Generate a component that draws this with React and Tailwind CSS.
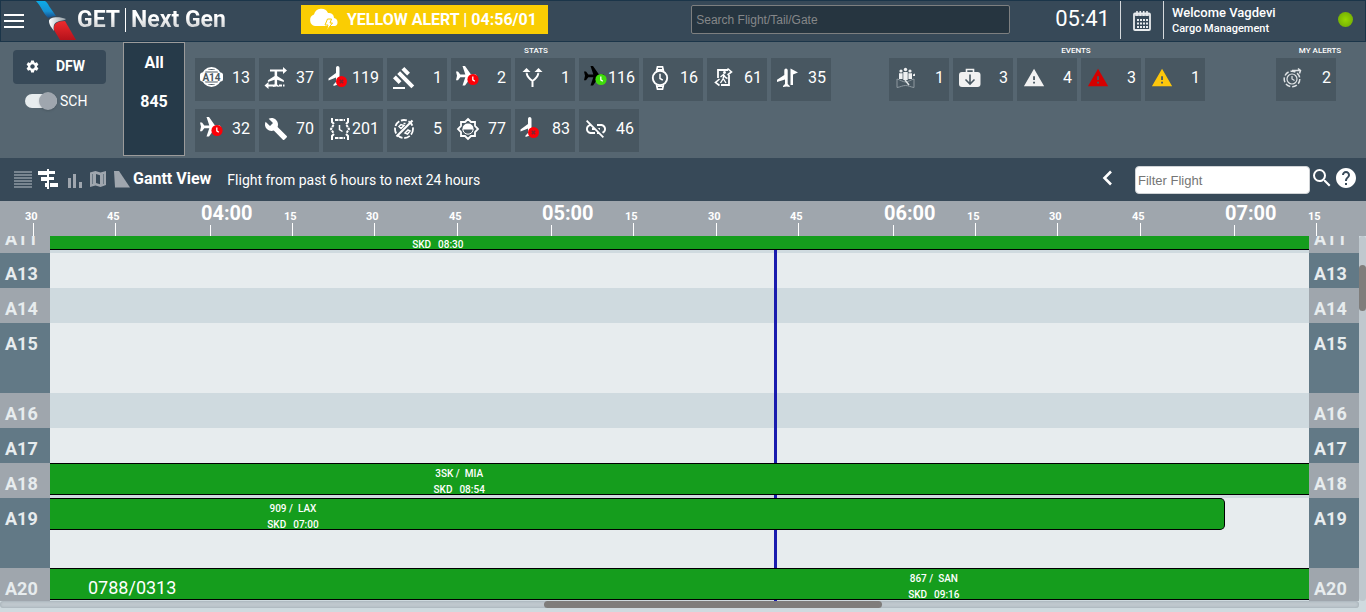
import React from "react";
import {
  MdBuild,
  MdGavel,
  MdHelp,
  MdLinkOff,
  MdSearch,
  MdSettings,
  MdWarning,
} from "react-icons/md";

const PLANE =
  "M21 16v-2l-8-5V3.500c0-.83-.67-1.500-1.500-1.500S10 2.670 10 3.500V9l-8 5v2l8-2.500V19l-2 1.500V22l3.500-1 3.500 1v-1.500L13 19v-5.500l8 2.500z";

function Svg({ children, className = "h-6 w-6" }) {
  return (
    <svg viewBox="0 0 24 24" className={className} fill="none" stroke="none" aria-hidden="true">
      {children}
    </svg>
  );
}

function GateIcon() {
  return (
    <Svg>
      <circle cx="11.500" cy="11" r="9" stroke="#fff" strokeWidth="2" />
      <path d="M6 4.800h11M6 17.200h11" stroke="#fff" strokeWidth="1.400" />
      <rect x="0" y="6.500" width="23" height="9" rx="2.500" fill="#fff" />
      <text x="11.500" y="14.500" textAnchor="middle" className="fill-[#485761] font-[Roboto] text-[10px] font-bold">
        A14
      </text>
    </Svg>
  );
}

function SwapPlaneIcon() {
  return (
    <Svg>
      <g transform="translate(2.200 2.500) scale(.84)">
        <path d={PLANE} fill="#fff" />
      </g>
      <path d="M6 3.500h13V1l4 3.500-4 3.500V5.500H6zM12 20.500H4.500v2.500L.5 19.500l4-3.500v2.500H12zM15 18.500h3v2h-3zM19 18.500h1.500v2H19z" fill="#fff" />
    </Svg>
  );
}

function CancelPlaneIcon() {
  return (
    <Svg>
      <path d="M8 2c0-1.300.8-2 1.700-2s1.800.7 1.800 2v16l-3 1-3 1v-1.500L8 16v-4.500L.5 14.500v-2L8 7z" fill="#fff" />
      <circle cx="13.500" cy="15.500" r="5.500" fill="#fb0007" />
      <path d="M11.800 13.800l3.400 3.400m0-3.400l-3.400 3.400" stroke="#7b2630" strokeWidth="1.500" />
    </Svg>
  );
}

function DelayPlaneIcon({ plane = "#fff", badge = "#fb0007" }) {
  return (
    <Svg>
      <path
        d="M0 5.500h2l2.300 3h5L6.500 0H9l6 8.500h4c1 0 1.800.6 1.800 1.300S20 11.200 19 11.200h-4l-6 8.300H6.500l2.800-8.300h-5l-2.300 3H0l1-4.400z"
        fill={plane}
      />
      <circle cx="17" cy="13.500" r="5.600" fill={badge} />
      <path d="M16.800 10.500v3.300l2 1.500" stroke="#fff" strokeWidth="1.300" />
    </Svg>
  );
}

function ForkIcon() {
  return (
    <Svg>
      <path d="M12.500 21v-6.500M12.500 15C8 12 6.500 9 6.500 5.500M12.500 15c4.500-3 6-6 6-9.500" stroke="#fff" strokeWidth="2" strokeDasharray="10 1" />
      <path d="M6.500 2l4 4h-8zM18.500 2l4 4h-8z" fill="#fff" />
    </Svg>
  );
}

function WatchIcon() {
  return (
    <Svg>
      <path d="M8.500 5l1-4.200h5l1 4.200M8.500 19l1 4.200h5l1-4.200" stroke="#fff" strokeWidth="1.700" />
      <path d="M8 3.500h8M8 20.500h8" stroke="#fff" strokeWidth="1.200" />
      <circle cx="12" cy="12" r="7.200" stroke="#fff" strokeWidth="1.900" />
      <path d="M12 7.800v4.700l2.800 1.700" stroke="#fff" strokeWidth="1.500" />
    </Svg>
  );
}

function ExitIcon() {
  return (
    <Svg>
      <path d="M6 12V4h10M17 9v10H9" stroke="#fff" strokeWidth="1.800" />
      <path d="M15.500 2.500l4 3.500-4 3M7.500 13l-4 3.500 4 3" stroke="#fff" strokeWidth="1.600" />
      <circle cx="12.500" cy="6.500" r="1.400" fill="#fff" />
      <path d="M8.500 11l3-2.500 2 3 2 1M12 9l-1 4-2.500 4M11.500 13l2.500 4" stroke="#fff" strokeWidth="1.400" />
    </Svg>
  );
}

function PlaneFlagIcon() {
  return (
    <Svg>
      <path d="M10 2.500c.9 0 1.700.7 1.700 2V18l2 2v1l-3-.5L7 21v-1l2-2v-4.500L1 16v-2.200l7.300-4.800V4.500c0-1.300.8-2 1.700-2z" fill="#fff" />
      <path d="M14.500 19V2.500l7.500 4-5 2V19z" fill="#fff" />
    </Svg>
  );
}

function CrewIcon() {
  return (
    <Svg>
      <g fill="#eef0f1">
        <circle cx="11.500" cy="3.500" r="1.700" />
        <circle cx="7" cy="5" r="1.600" />
        <circle cx="16" cy="5" r="1.600" />
        <path d="M5 7.300h3.600V13H5zM9.300 6h4.400v8H9.300zM14.400 7.300H18V13h-3.600zM19 8.500l2-1V10h-2z" />
      </g>
      <path d="M3 13c3.500 1 6 3 8.500 3s5-2 8.500-3v8.500c-3.500-.5-5.500-2-8.500-2s-5 1.500-8.500 2z" stroke="#8d989f" strokeWidth="1" />
      <path d="M11 14l4 5" stroke="#dfe3e5" strokeWidth="1.500" />
    </Svg>
  );
}

function BaggageIcon() {
  return (
    <Svg>
      <path d="M8.500 6V3.500h7V6" stroke="#f1f1f1" strokeWidth="1.600" />
      <rect x="1" y="6" width="21.500" height="15" rx="3" fill="#f1f1f1" />
      <path d="M12 8.500v9M7.500 13.500L12 18l4.500-4.500" stroke="#485761" strokeWidth="1.600" />
    </Svg>
  );
}

function AlertIcon({ color }) {
  return (
    <Svg>
      <g transform="translate(1 1) scale(.92)">
        <MdWarning color={color} size={24} />
      </g>
    </Svg>
  );
}

function AlarmIcon() {
  return (
    <Svg>
      <g stroke="#dfe3e5">
        <circle cx="11" cy="13" r="7.800" strokeWidth="1.500" strokeDasharray="5 2" />
        <circle cx="11" cy="13" r="5" strokeWidth="1.200" />
        <path d="M11 10v3l2.500 1.500" strokeWidth="1.200" />
        <path d="M11 4.500h8M17 2.500l2.500 2-1 3" strokeWidth="1.500" />
      </g>
    </Svg>
  );
}

function TimeWindowIcon() {
  return (
    <Svg>
      <path d="M4 1v4l2 2M20 1v4l-2 2M4 23v-4l2-2M20 23v-4l-2-2" stroke="#fff" strokeWidth="2" />
      <path d="M7 3h10M7 21h10" stroke="#fff" strokeWidth="2" strokeDasharray="3.500 .8" />
      <path d="M5.500 8L3 12l2.500 4M18.500 8l2.500 4-2.500 4" stroke="#fff" strokeWidth="2" strokeDasharray="2.500 .8" />
      <path d="M11.500 8v4.500l3 2" stroke="#fff" strokeWidth="1.500" />
    </Svg>
  );
}

function NoServiceIcon() {
  return (
    <Svg>
      <circle cx="12" cy="12" r="9" stroke="#fff" strokeWidth="1.800" strokeDasharray="6 1.800" />
      <path d="M4.500 19.500l16-16" stroke="#fff" strokeWidth="2.200" />
      <path d="M7 9.500l2-2 3 1-3 3zM13 16l3-3 2 1-2.500 3zM11.500 6.500h2" stroke="#fff" strokeWidth="1.500" />
    </Svg>
  );
}

function DaylightIcon() {
  return (
    <Svg>
      <path d="M12 2l3 3h4v4l3 3-3 3v4h-4l-3 3-3-3H5v-4l-3-3 3-3V5h4z" stroke="#fff" strokeWidth="1.800" />
      <path d="M6.500 12.500v-1a5.500 5 0 0111 0v1z" fill="#fff" />
      <path d="M6.800 12a5.200 5.200 0 0010.400 0" stroke="#fff" strokeWidth="1" />
    </Svg>
  );
}

const stats = [
  ["Gate change", "13", <GateIcon />],
  ["Tail swap", "37", <SwapPlaneIcon />],
  ["Cancelled arrival", "119", <CancelPlaneIcon />],
  ["Legality", "1", <MdGavel size={24} />],
  ["Delayed departure", "2", <DelayPlaneIcon />],
  ["Diversion", "1", <ForkIcon />],
  ["Early", "116", <DelayPlaneIcon plane="#000" badge="#3fdc0b" />],
  ["Time watch", "16", <WatchIcon />],
  ["Gate return", "61", <ExitIcon />],
  ["Flagged", "35", <PlaneFlagIcon />],
  ["Delayed arrival", "32", <DelayPlaneIcon />],
  ["Maintenance", "70", <MdBuild size={24} />],
  ["Time window", "201", <TimeWindowIcon />],
  ["Out of service", "5", <NoServiceIcon />],
  ["Daylight", "77", <DaylightIcon />],
  ["Cancelled departure", "83", <CancelPlaneIcon />],
  ["Unlinked", "46", <MdLinkOff size={24} />],
];

const events = [
  ["Crew", "1", <CrewIcon />],
  ["Baggage", "3", <BaggageIcon />],
  ["Notices", "4", <AlertIcon color="#f1f1f1" />],
  ["Critical", "3", <AlertIcon color="#d50000" />],
  ["Warnings", "1", <AlertIcon color="#fdc70c" />],
];

const myAlerts = [["Alarms", "2", <AlarmIcon />]];

function TileGroup({ title, tiles, className }) {
  return (
    <section className={className}>
      <h2 className="pt-[3px] pb-px text-center text-[8px] leading-3 font-medium whitespace-nowrap">{title}</h2>
      <div className="flex flex-wrap gap-x-1 gap-y-2">
        {tiles.map(([name, count, icon]) => (
          <button
            key={name}
            aria-label={name + " " + count}
            className="flex h-[43px] w-[60px] items-center justify-between bg-[#485761] px-[5px] pb-[3px] text-base"
          >
            <span className="shrink-0">{icon}</span>
            <span>{count}</span>
          </button>
        ))}
      </div>
    </section>
  );
}

function Header() {
  return (
    <header className="flex h-[42px] shrink-0 items-center border border-[#1b3549] bg-[#374958]">
      <button aria-label="Menu" className="ml-[3px] flex w-5 flex-col gap-1">
        <span className="h-[2px] bg-white" />
        <span className="h-[2px] bg-white" />
        <span className="h-[2px] bg-white" />
      </button>
      <svg viewBox="0 0 40 40" className="ml-3 h-10 w-10" aria-hidden="true">
        <defs>
          <linearGradient id="blue" x1="0" y1="0" x2="0" y2="1">
            <stop offset="0" stopColor="#0cabe8" />
            <stop offset=".6" stopColor="#1791d2" />
            <stop offset="1" stopColor="#174a86" />
          </linearGradient>
          <linearGradient id="red" x1="0" y1="0" x2="0" y2="1">
            <stop offset="0" stopColor="#ef2b2d" />
            <stop offset="1" stopColor="#b5121b" />
          </linearGradient>
          <linearGradient id="silver" x1="0" y1="0" x2="1" y2="0">
            <stop offset="0" stopColor="#ffffff" />
            <stop offset="1" stopColor="#8f9aa2" />
          </linearGradient>
        </defs>
        <path d="M0 0h9c2 1 3 3 4 5l7 10c-3 0-6 1-8 2C7 12 5 5 0 0z" fill="url(#blue)" />
        <path d="M13 20c0-4 10-5 17-2-1 2-6 1-9 3-3 1-4 4-3 9-2-3-5-6-5-10z" fill="url(#silver)" />
        <path d="M18 29c-1-6 3-9 11-9l11 19H24z" fill="url(#red)" />
      </svg>
      <h1 className="ml-px flex items-center pb-[2px] text-[23px] font-bold">
        <span className="bg-gradient-to-b from-white from-40% to-[#a9adb1] bg-clip-text text-transparent">GET</span>
        <span className="mx-[5px] h-6 w-px bg-white" />
        <span className="bg-gradient-to-b from-white from-40% to-[#a9adb1] bg-clip-text text-transparent">Next Gen</span>
      </h1>
      <div className="ml-[75px] flex h-[29px] w-[247px] items-center self-start bg-[#facd03] pl-2 text-base font-bold mt-1">
        <svg viewBox="0 0 30 24" className="mr-2 h-6 w-[30px]" aria-hidden="true">
          <path d="M6 18a6 6 0 01-1-11.500A7.500 7.500 0 0119 5a5 5 0 016 5 4.200 4.200 0 011 8z" fill="#fff" />
          <path d="M18.500 11h4l-1.500 4h2.500l-6 7.500 1.500-5.500h-3z" fill="#fff" stroke="#facd03" strokeWidth="1" />
        </svg>
        YELLOW ALERT | 04:56/01
      </div>
      <input
        type="search"
        aria-label="Search Flight/Tail/Gate"
        placeholder="Search Flight/Tail/Gate"
        className="mt-1 ml-auto h-[29px] w-[319px] self-start rounded-[2px] border border-[#7d7f80] bg-[#263540] px-1 font-['Liberation_Sans'] text-xs placeholder:text-[#858789]"
      />
      <time className="ml-[45px] pb-[5px] text-[22px]">05:41</time>
      <div className="ml-[10px] flex h-[38px] w-11 items-center justify-center self-start border-x border-[#d5d9dc]">
        <button aria-label="Calendar">
          <svg viewBox="0 0 18 21" className="h-[21px] w-[18px]" fill="none" aria-hidden="true">
            <rect x="1" y="3.500" width="16" height="16.500" rx="1" stroke="#e9ecee" strokeWidth="1.800" />
            <path d="M2 5h14M4 1v5M7.300 1v5M10.700 1v5M14 1v5" stroke="#e9ecee" strokeWidth="1.600" />
            <path d="M4 10h11M4 13.500h11M4 17h11" stroke="#e9ecee" strokeWidth="2" strokeDasharray="2 1" />
          </svg>
        </button>
      </div>
      <div className="ml-2 w-[166px] font-medium">
        <p className="text-[13px] leading-4">Welcome Vagdevi</p>
        <p className="text-[11px] leading-4">Cargo Management</p>
      </div>
      <span className="mr-3 mb-1 h-[15px] w-[15px] rounded-full bg-radial from-[#96d800] to-[#6ba405]" />
    </header>
  );
}

function StatsPanel() {
  return (
    <div className="flex h-[116px] shrink-0 bg-[#566671]">
      <div className="ml-[13px] w-[93px] pt-2">
        <button className="flex h-[34px] w-full items-center rounded bg-[#374958] pb-[2px] pl-3 text-sm font-bold">
          <MdSettings size={15} />
          <span className="ml-4">DFW</span>
        </button>
        <label className="mt-[7px] ml-3 flex items-center text-sm">
          <input type="checkbox" className="peer sr-only" />
          <span className="mr-[3px] flex h-[14px] w-8 items-center justify-end rounded-full bg-[#e7ecee]">
            <span className="h-[18px] w-[18px] rounded-full bg-[#9fa6ae] shadow" />
          </span>
          SCH
        </label>
      </div>
      <button className="mr-[10px] ml-[17px] flex h-[114px] w-[62px] flex-col items-center gap-[19px] border border-[#9b9b9b] bg-[#263a49] pt-[10px] text-base leading-5 font-bold">
        <span>All</span>
        <span>845</span>
      </button>
      <TileGroup title="STATS" tiles={stats} className="w-[682px]" />
      <TileGroup title="EVENTS" tiles={events} className="ml-3 w-[374px]" />
      <TileGroup title="MY ALERTS" tiles={myAlerts} className="ml-[13px] flex-1 pr-[2px]" />
    </div>
  );
}

function Toolbar() {
  return (
    <div className="flex h-[43px] shrink-0 items-center bg-[#374958]">
      <nav className="ml-[14px] flex items-center gap-[6px] pb-[2px]">
        <button aria-label="List view">
          <svg viewBox="0 0 18 18" className="h-[18px] w-[18px]" aria-hidden="true">
            <path d="M0 2h18M0 5h18M0 8h18M0 11h18M0 14h18M0 17h18" stroke="#8e99a2" strokeWidth="1.500" />
          </svg>
        </button>
        <button aria-label="Gantt view">
          <svg viewBox="0 0 20 20" className="h-5 w-5" fill="#fff" aria-hidden="true">
            <path d="M0 2h9v4H0zM10 2h7v3h-7zM3 8h6v4H3zM11 8h5v3h-5zM7 14h4v4H7zM12 14h8v4h-8zM9 0h2v20H9z" />
          </svg>
        </button>
        <button aria-label="Chart view" className="pl-[3px]">
          <svg viewBox="0 0 16 18" className="h-[18px] w-4" fill="#9fa6ae" aria-hidden="true">
            <path d="M1 8h3v10H1zM6 4h3v14H6zM12 12h3v6h-3z" />
          </svg>
        </button>
        <button aria-label="Map view">
          <svg viewBox="0 0 18 18" className="h-[18px] w-[18px]" aria-hidden="true">
            <path d="M1 2.500L6.500 1l5 1.500L17 1v14l-5.500 2-5-1.500L1 17z" fill="#9fa6ae" />
            <path d="M7 4l4 1.300v9L7 13z" fill="#374958" />
            <path d="M3.500 4v10M14.500 4v10" stroke="#6b7985" strokeWidth="1" />
          </svg>
        </button>
        <button aria-label="Slope view">
          <svg viewBox="0 0 18 18" className="h-[18px] w-[18px]" fill="#9fa6ae" aria-hidden="true">
            <path d="M1 1h5l11 16.500H2z" />
          </svg>
        </button>
      </nav>
      <h2 className="ml-[2px] pb-[2px] text-base font-bold">Gantt View</h2>
      <p className="ml-4 text-sm">Flight from past 6 hours to next 24 hours</p>
      <button aria-label="Previous" className="ml-auto pb-1">
        <svg viewBox="0 0 12 16" className="h-4 w-3" aria-hidden="true">
          <path d="M10 1.500L3.500 8l6.500 6.500" fill="none" stroke="#fff" strokeWidth="2.600" />
        </svg>
      </button>
      <input
        type="search"
        aria-label="Filter Flight"
        placeholder="Filter Flight"
        className="ml-[22px] h-7 w-[175px] rounded border border-[#d0d3d6] bg-white px-[2px] pt-[2px] font-['Liberation_Sans'] text-[13px] text-gray-800 placeholder:text-[#757575]"
      />
      <button aria-label="Search" className="pb-1">
        <MdSearch size={24} />
      </button>
      <button aria-label="Help" className="mr-2 pb-1">
        <MdHelp size={24} />
      </button>
    </div>
  );
}

const ticks = ["30", "45", "04:00", "15", "30", "45", "05:00", "15", "30", "45", "06:00", "15", "30", "45", "07:00", "15"];

function TimeAxis() {
  return (
    <div className="grid h-[35px] shrink-0 grid-cols-[82fr_95fr_82fr_82fr_83fr_94fr_82fr_83fr_82fr_95fr_82fr_82fr_83fr_94fr_82fr_59fr] overflow-hidden bg-[#9fa6ad] pl-6 font-bold">
      {ticks.map((tick, i) => (
        <div key={i} className="flex min-w-0 flex-col justify-between">
          {tick.length > 2 ? (
            <span className="text-xl leading-6">{tick}</span>
          ) : (
            <span className="pt-[9px] pl-px text-[11px] leading-[13px]">{tick}</span>
          )}
          <span className="ml-[9px] w-px flex-1 bg-white" />
        </div>
      ))}
    </div>
  );
}

const gates = [
  { name: "A11", bar: { width: "100%", at: "30.8%", skd: "08:30" } },
  { name: "A13" },
  { name: "A14" },
  { name: "A15", tall: true },
  { name: "A16" },
  { name: "A17" },
  { name: "A18", bar: { width: "100%", at: "32.5%", flight: "3SK /", city: "MIA", skd: "08:54" } },
  { name: "A19", tall: true, bar: { width: "93.3%", at: "20.7%", flight: "909 /", city: "LAX", skd: "07:00" } },
  { name: "A20", bar: { width: "100%", at: "70.2%", flight: "867 /", city: "SAN", skd: "09:16", turn: "0788/0313" } },
];

function GateColumn() {
  return (
    <div className="-mt-[18px] w-[50px] shrink-0">
      {gates.map((gate, i) => (
        <div
          key={gate.name}
          className={
            (gate.tall ? "h-[70px]" : "h-[35px]") +
            (i % 2 ? " bg-[#627986]" : " bg-[#9fa6ad]") +
            " pt-2 pl-[5px] text-lg leading-[26px] font-bold text-[#e7ecee]"
          }
        >
          {gate.name}
        </div>
      ))}
    </div>
  );
}

function FlightBar({ bar }) {
  const full = bar.width === "100%";
  return (
    <div
      className={"relative z-10 h-8 border-y border-black bg-[#159d1d]" + (full ? "" : " rounded-r-[5px] border-r")}
      style={{ width: bar.width }}
    >
      {bar.turn && <span className="absolute top-[5px] left-[38px] text-lg leading-7">{bar.turn}</span>}
      <div
        className="absolute top-[2px] -translate-x-1/2 text-center text-[10px] leading-4 font-medium whitespace-nowrap"
        style={{ left: bar.at }}
      >
        <p className="flex h-4 justify-center gap-[5px]">
          <span>{bar.flight}</span>
          <span>{bar.city}</span>
        </p>
        <p className="flex justify-center gap-[7px]">
          <span>SKD</span>
          <span>{bar.skd}</span>
        </p>
      </div>
    </div>
  );
}

function GanttBoard() {
  return (
    <main className="flex min-h-0 flex-1 flex-col overflow-hidden bg-[#cfdadf] pb-1">
      <div className="flex min-h-0 flex-1 overflow-hidden">
        <GateColumn />
        <div className="relative -mt-[18px] flex-1">
          {gates.map((gate, i) => (
            <div
              key={gate.name}
              className={(gate.tall ? "h-[70px]" : "h-[35px]") + (i % 2 ? " bg-[#e7ecee]" : " bg-[#cfdadf]")}
            >
              {gate.bar && <FlightBar bar={gate.bar} />}
            </div>
          ))}
          <div className="absolute inset-y-0 left-[57.5%] w-[3px] bg-[#1a1cae]" />
        </div>
        <GateColumn />
        <div className="w-[7px] shrink-0 rounded bg-[#bfc8ce] pt-[29px]">
          <div className="h-[46px] rounded bg-[#7f7d7b]" />
        </div>
      </div>
      <div className="mr-[7px] h-[7px] shrink-0 rounded bg-[#bfc8ce] shadow-[inset_0_0_3px_#9aa5ac]">
        <div className="ml-[40%] h-full w-[24.900%] rounded bg-[#7f7d7b]" />
      </div>
    </main>
  );
}

export default function App() {
  return (
    <div className="flex h-screen flex-col overflow-hidden font-[Roboto,sans-serif] text-white">
      <Header />
      <StatsPanel />
      <Toolbar />
      <TimeAxis />
      <GanttBoard />
    </div>
  );
}
